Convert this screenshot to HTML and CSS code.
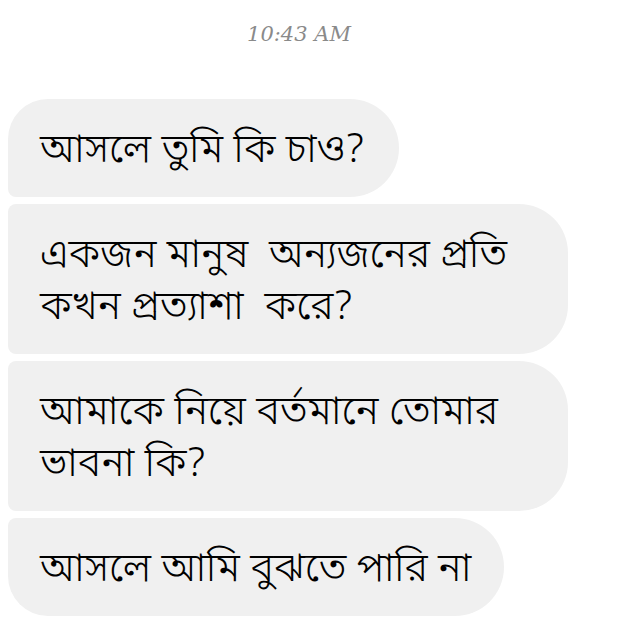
FILE: index.html
```html
<!DOCTYPE html>
<html lang="bn">
<head>
<meta charset="utf-8">
<link rel="stylesheet" href="styles.css">
</head>
<body>
<div class="chat">
  <div class="time">10:43 AM</div>
  <div class="group">
    <div class="bubble first">আসলে তুমি কি চাও?</div>
    <div class="bubble mid">একজন মানুষ&nbsp; অন্যজনের প্রতি<br>কখন প্রত্যাশা&nbsp; করে?</div>
    <div class="bubble mid">আমাকে নিয়ে বর্তমানে তোমার<br>ভাবনা কি?</div>
    <div class="bubble last">আসলে আমি বুঝতে পারি না</div>
  </div>
</div>
</body>
</html>
```

FILE: styles.css
```css
html, body {
  margin: 0;
  padding: 0;
  background: #ffffff;
}
.chat {
  width: 640px;
  height: 641px;
  overflow: hidden;
  font-family: "Noto Sans Bengali", "Noto Sans", sans-serif;
}
.time {
  padding-top: 22px;
  height: 99px;
  box-sizing: border-box;
  text-align: center;
  padding-right: 42px;
  font-family: "DejaVu Serif", serif;
  font-style: italic;
  font-size: 21px;
  color: #8a8a8a;
}
.group {
  display: flex;
  flex-direction: column;
  align-items: flex-start;
  gap: 7px;
  padding-left: 8px;
}
.bubble {
  background: #f0f0f0;
  color: #000;
  font-size: 40px;
  font-weight: 360;
  line-height: 52px;
  padding: 27px 33px 19px 32px;
  border-radius: 8px 49px 49px 8px;
}
.bubble.mid {
  width: 560px;
  box-sizing: border-box;
}
.bubble.first {
  padding-right: 34px;
  border-radius: 40px 49px 49px 8px;
}
.bubble.last {
  border-radius: 8px 49px 49px 40px;
}
```
